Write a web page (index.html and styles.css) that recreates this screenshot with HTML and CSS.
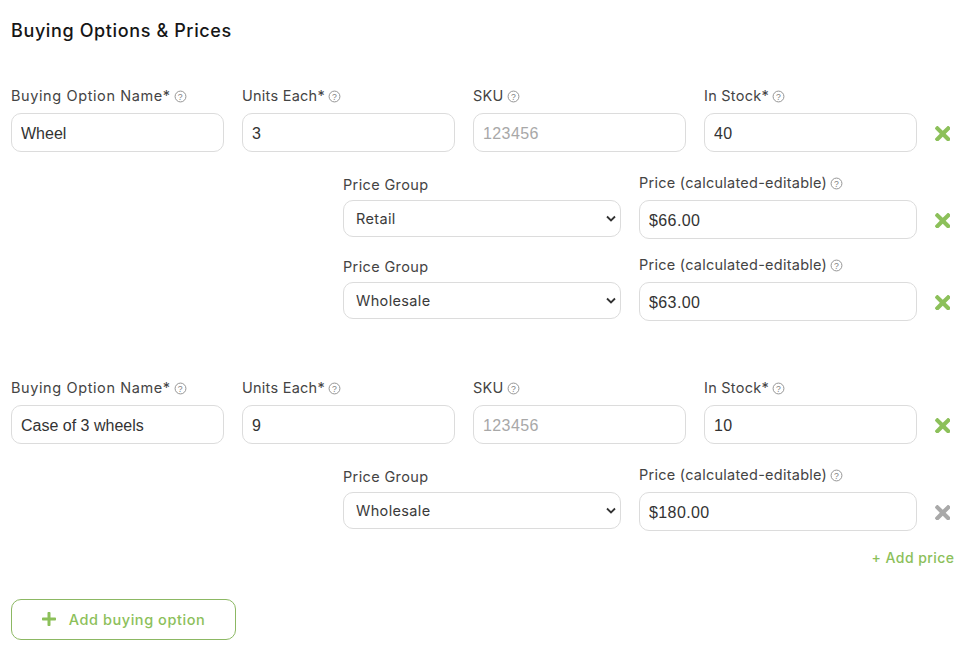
FILE: index.html
```html
<!DOCTYPE html>
<html lang="en">
<head>
<meta charset="utf-8">
<title>Buying Options &amp; Prices</title>
<link rel="stylesheet" href="styles.css">
</head>
<body>
<main class="page">
  <h2 class="title">Buying Options &amp; Prices</h2>

  <section class="option">
    <div class="row">
      <div class="fields four">
        <div class="field"><label class="label name">Buying Option Name*<svg class="help" viewBox="0 0 12 12"><circle cx="6" cy="6" r="5"/><text x="6" y="8.8">?</text></svg></label><input class="input" value="Wheel"></div>
        <div class="field"><label class="label">Units Each*<svg class="help" viewBox="0 0 12 12"><circle cx="6" cy="6" r="5"/><text x="6" y="8.8">?</text></svg></label><input class="input num" value="3"></div>
        <div class="field"><label class="label">SKU<svg class="help" viewBox="0 0 12 12"><circle cx="6" cy="6" r="5"/><text x="6" y="8.8">?</text></svg></label><input class="input num" placeholder="123456"></div>
        <div class="field"><label class="label">In Stock*<svg class="help" viewBox="0 0 12 12"><circle cx="6" cy="6" r="5"/><text x="6" y="8.8">?</text></svg></label><input class="input num" value="40"></div>
      </div>
      <svg class="remove" viewBox="0 80 352 352"><path d="M242.72 256l100.07-100.07c12.28-12.28 12.28-32.19 0-44.48l-22.24-22.24c-12.28-12.28-32.19-12.28-44.48 0L176 189.28 75.93 89.21c-12.28-12.28-32.19-12.28-44.48 0L9.21 111.45c-12.28 12.28-12.28 32.19 0 44.48L109.28 256 9.21 356.07c-12.28 12.28-12.28 32.19 0 44.48l22.24 22.24c12.28 12.28 32.2 12.28 44.48 0L176 322.72l100.07 100.07c12.28 12.28 32.2 12.28 44.48 0l22.24-22.24c12.28-12.28 12.28-32.19 0-44.48L242.72 256z"/></svg>
    </div>
    <div class="row price">
      <div class="fields two">
        <div class="field"><label class="label group">Price Group</label><select class="select"><option>Retail</option></select></div>
        <div class="field"><label class="label">Price (calculated-editable)<svg class="help" viewBox="0 0 12 12"><circle cx="6" cy="6" r="5"/><text x="6" y="8.8">?</text></svg></label><input class="input num" value="$66.00"></div>
      </div>
      <svg class="remove" viewBox="0 80 352 352"><path d="M242.72 256l100.07-100.07c12.28-12.28 12.28-32.19 0-44.48l-22.24-22.24c-12.28-12.28-32.19-12.28-44.48 0L176 189.28 75.93 89.21c-12.28-12.28-32.19-12.28-44.48 0L9.21 111.45c-12.28 12.28-12.28 32.19 0 44.48L109.28 256 9.21 356.07c-12.28 12.28-12.28 32.19 0 44.48l22.24 22.24c12.28 12.28 32.2 12.28 44.48 0L176 322.72l100.07 100.07c12.28 12.28 32.2 12.28 44.48 0l22.24-22.24c12.28-12.28 12.28-32.19 0-44.48L242.72 256z"/></svg>
    </div>
    <div class="row price tight">
      <div class="fields two">
        <div class="field"><label class="label group">Price Group</label><select class="select"><option>Wholesale</option></select></div>
        <div class="field"><label class="label">Price (calculated-editable)<svg class="help" viewBox="0 0 12 12"><circle cx="6" cy="6" r="5"/><text x="6" y="8.8">?</text></svg></label><input class="input num" value="$63.00"></div>
      </div>
      <svg class="remove" viewBox="0 80 352 352"><path d="M242.72 256l100.07-100.07c12.28-12.28 12.28-32.19 0-44.48l-22.24-22.24c-12.28-12.28-32.19-12.28-44.48 0L176 189.28 75.93 89.21c-12.28-12.28-32.19-12.28-44.48 0L9.21 111.45c-12.28 12.28-12.28 32.19 0 44.48L109.28 256 9.21 356.07c-12.28 12.28-12.28 32.19 0 44.48l22.24 22.24c12.28 12.28 32.2 12.28 44.48 0L176 322.72l100.07 100.07c12.28 12.28 32.2 12.28 44.48 0l22.24-22.24c12.28-12.28 12.28-32.19 0-44.48L242.72 256z"/></svg>
    </div>
  </section>

  <section class="option second">
    <div class="row">
      <div class="fields four">
        <div class="field"><label class="label name">Buying Option Name*<svg class="help" viewBox="0 0 12 12"><circle cx="6" cy="6" r="5"/><text x="6" y="8.8">?</text></svg></label><input class="input" value="Case of 3 wheels"></div>
        <div class="field"><label class="label">Units Each*<svg class="help" viewBox="0 0 12 12"><circle cx="6" cy="6" r="5"/><text x="6" y="8.8">?</text></svg></label><input class="input num" value="9"></div>
        <div class="field"><label class="label">SKU<svg class="help" viewBox="0 0 12 12"><circle cx="6" cy="6" r="5"/><text x="6" y="8.8">?</text></svg></label><input class="input num" placeholder="123456"></div>
        <div class="field"><label class="label">In Stock*<svg class="help" viewBox="0 0 12 12"><circle cx="6" cy="6" r="5"/><text x="6" y="8.8">?</text></svg></label><input class="input num" value="10"></div>
      </div>
      <svg class="remove" viewBox="0 80 352 352"><path d="M242.72 256l100.07-100.07c12.28-12.28 12.28-32.19 0-44.48l-22.24-22.24c-12.28-12.28-32.19-12.28-44.48 0L176 189.28 75.93 89.21c-12.28-12.28-32.19-12.28-44.48 0L9.21 111.45c-12.28 12.28-12.28 32.19 0 44.48L109.28 256 9.21 356.07c-12.28 12.28-12.28 32.19 0 44.48l22.24 22.24c12.28 12.28 32.2 12.28 44.48 0L176 322.72l100.07 100.07c12.28 12.28 32.2 12.28 44.48 0l22.24-22.24c12.28-12.28 12.28-32.19 0-44.48L242.72 256z"/></svg>
    </div>
    <div class="row price">
      <div class="fields two">
        <div class="field"><label class="label group">Price Group</label><select class="select"><option>Wholesale</option></select></div>
        <div class="field"><label class="label">Price (calculated-editable)<svg class="help" viewBox="0 0 12 12"><circle cx="6" cy="6" r="5"/><text x="6" y="8.8">?</text></svg></label><input class="input num" value="$180.00"></div>
      </div>
      <svg class="remove muted" viewBox="0 80 352 352"><path d="M242.72 256l100.07-100.07c12.28-12.28 12.28-32.19 0-44.48l-22.24-22.24c-12.28-12.28-32.19-12.28-44.48 0L176 189.28 75.93 89.21c-12.28-12.28-32.19-12.28-44.48 0L9.21 111.45c-12.28 12.28-12.28 32.19 0 44.48L109.28 256 9.21 356.07c-12.28 12.28-12.28 32.19 0 44.48l22.24 22.24c12.28 12.28 32.2 12.28 44.48 0L176 322.72l100.07 100.07c12.28 12.28 32.2 12.28 44.48 0l22.24-22.24c12.28-12.28 12.28-32.19 0-44.48L242.72 256z"/></svg>
    </div>
    <div class="add-price-row"><a class="add-price">+ Add price</a></div>
  </section>

  <button class="add-option"><svg class="plus" viewBox="0 32 448 448"><path d="M416 208H272V64c0-17.67-14.33-32-32-32h-32c-17.67 0-32 14.33-32 32v144H32c-17.67 0-32 14.33-32 32v32c0 17.67 14.33 32 32 32h144v144c0 17.67 14.33 32 32 32h32c17.67 0 32-14.33 32-32V304h144c17.67 0 32-14.33 32-32v-32c0-17.67-14.33-32-32-32z"/></svg>Add buying option</button>
</main>
</body>
</html>
```
FILE: styles.css
```css
* { box-sizing: border-box; }
html, body { margin: 0; padding: 0; background: #fff; }
body { font-family: "Inter", "Liberation Sans", sans-serif; color: #3a3a3a; }
.page { padding: 20px 0 0 11px; width: 980px; }
.title { margin: 0 0 44px; font-size: 18px; line-height: 22px; font-weight: 500; color: #161616; letter-spacing: .62px; }
.row { display: flex; align-items: flex-start; }
.fields { display: grid; gap: 18px; width: 906px; }
.four { grid-template-columns: repeat(4, 213px); }
.two { grid-template-columns: repeat(2, 278px); justify-content: end; }
.price { margin-top: 21px; }
.price.tight { margin-top: 16px; }
.second { margin-top: 57px; }
.label { display: flex; align-items: center; height: 20px; margin-bottom: 7px; font-size: 14.5px; line-height: 20px; color: #444; letter-spacing: .25px; white-space: pre; }
.label.name { letter-spacing: .6px; }
.label.group { height: 22px; padding-top: 2px; margin-bottom: 5px; letter-spacing: .36px; }
.help { width: 13px; height: 13px; margin-left: 3px; }
.help circle { fill: none; stroke: #929292; stroke-width: .9; }
.help text { font-family: "Liberation Sans", sans-serif; font-size: 8px; fill: #808080; text-anchor: middle; }
.input { display: block; width: 100%; height: 39px; padding: 2px 9px 0; border: 1px solid #dcdcdc; border-radius: 10px; background: #fff; font-family: "Liberation Sans", sans-serif; font-size: 16px; color: #333; outline: none; }
.input.num { letter-spacing: .4px; }
.input::placeholder { color: #a8a8a8; opacity: 1; }
.select { display: block; width: 100%; height: 37px; padding: 0 12px; border: 1px solid #dcdcdc; border-radius: 10px; font-family: "Inter", sans-serif; font-size: 14.5px; letter-spacing: .36px; color: #3a3a3a; appearance: none; background: #fff url("data:image/svg+xml,%3Csvg xmlns='http://www.w3.org/2000/svg' width='10' height='7' viewBox='0 0 10 7'%3E%3Cpath d='M1 1.5L5 5.5L9 1.5' fill='none' stroke='%23333' stroke-width='1.8'/%3E%3C/svg%3E") no-repeat right 4px center; }
.remove { flex: none; width: 15.5px; height: 15.5px; margin: 39.5px 0 0 17.5px; fill: #8cc05a; }
.remove.muted { fill: #a9a9a9; }
.add-price-row { display: flex; justify-content: flex-end; width: 943.5px; margin-top: 17px; }
.add-price { font-size: 14px; line-height: 20px; font-weight: 500; color: #8cc05a; letter-spacing: .45px; }
.add-option { display: flex; align-items: center; justify-content: center; width: 225px; height: 41px; margin-top: 31px; padding: 0 0 1px; border: 1px solid #8cb863; border-radius: 10px; background: #fff; font-family: "Inter", sans-serif; font-size: 14.5px; font-weight: 500; letter-spacing: .56px; color: #8cc05a; }
.plus { width: 14px; height: 14px; margin-right: 13px; fill: #8cc05a; }
```
